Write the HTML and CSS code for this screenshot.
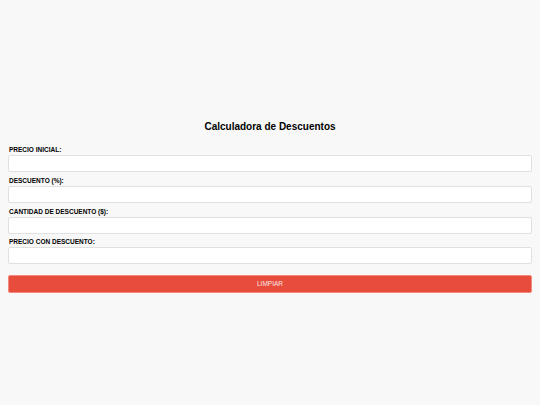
FILE: index.html
```html
<!DOCTYPE html>
<html lang="es">
<head>
<meta charset="utf-8">
<title>Calculadora de Descuentos</title>
<link rel="stylesheet" href="styles.css">
</head>
<body>
<main class="calc">
  <h2 class="calc-title">Calculadora de Descuentos</h2>
  <div class="field">
    <label class="field-label" for="precio">PRECIO INICIAL:</label>
    <input class="field-input" id="precio" type="text">
  </div>
  <div class="field">
    <label class="field-label" for="desc">DESCUENTO (%):</label>
    <input class="field-input" id="desc" type="text">
  </div>
  <div class="field">
    <label class="field-label" for="cant">CANTIDAD DE DESCUENTO ($):</label>
    <input class="field-input" id="cant" type="text">
  </div>
  <div class="field">
    <label class="field-label" for="final">PRECIO CON DESCUENTO:</label>
    <input class="field-input" id="final" type="text">
  </div>
  <button class="btn-clear" type="button">LIMPIAR</button>
</main>
</body>
</html>
```
FILE: styles.css
```css
html, body {
  margin: 0;
  padding: 0;
}
body {
  background: #f8f8f8;
  font-family: "Liberation Sans", Arial, sans-serif;
  color: #000;
  min-height: 100vh;
  display: flex;
  flex-direction: column;
  justify-content: center;
  padding: 0 8px;
  box-sizing: border-box;
}
.calc {
  display: flex;
  flex-direction: column;
  padding-top: 8px;
}
.calc-title {
  margin: 0 0 11px;
  text-align: center;
  font-size: 10px;
  line-height: 14px;
  font-weight: bold;
}
.field {
  display: flex;
  flex-direction: column;
  margin-bottom: 3.67px;
}
.field-label {
  font-size: 6.5px;
  line-height: 9px;
  font-weight: bold;
  margin-bottom: 1px;
  padding-left: 1px;
}
.field-input {
  height: 17px;
  box-sizing: border-box;
  border: 1px solid #e0e0e0;
  border-radius: 2px;
  background: #fff;
  margin: 0;
  padding: 0 4px;
  font: inherit;
  font-size: 7px;
}
.btn-clear {
  margin-top: 7px;
  height: 18px;
  border: 1px solid #f08a7e;
  border-radius: 2px;
  background: #e74c3c;
  color: #fde6e3;
  font-family: inherit;
  font-size: 6.5px;
  padding: 0;
}
```
